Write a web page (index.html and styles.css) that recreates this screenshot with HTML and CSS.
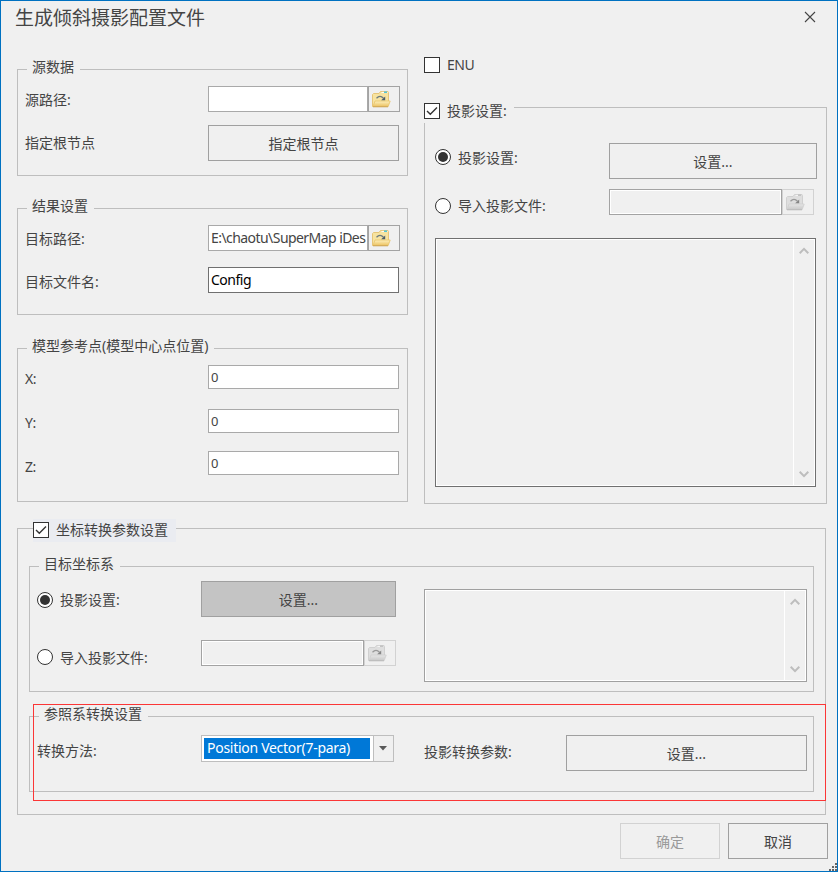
FILE: index.html
```
<!DOCTYPE html>
<html lang="zh-CN">
<head>
<meta charset="utf-8">
<title>生成倾斜摄影配置文件</title>
<link rel="stylesheet" href="styles.css">
</head>
<body>
<svg class="defs" width="0" height="0" aria-hidden="true">
  <defs>
    <linearGradient id="gold" x1="0" y1="0" x2="0" y2="1"><stop offset="0" stop-color="#fdf0bd"/><stop offset="1" stop-color="#ecc261"/></linearGradient>
    <linearGradient id="grey" x1="0" y1="0" x2="0" y2="1"><stop offset="0" stop-color="#e6e6e6"/><stop offset="1" stop-color="#c9c9c9"/></linearGradient>
    <symbol id="folder" viewBox="0 0 20 18">
      <path d="M1.5 16.5V4.5L2.5 3.5H8L9.5 1.5H17L17.5 2.5V11L15.5 16.5Z" fill="#f7e3a0" stroke="#e6c578"/>
      <path d="M10.5 2.4H16.5" stroke="#fff"/><path d="M13 2.2H16" stroke="#42bed0" stroke-width="1.4"/>
      <path d="M2 16.5L4 11H19.2L17.2 16.5Z" fill="url(#gold)" stroke="#e8c468" stroke-width=".8"/>
      <path d="M2 16.8H17" stroke="#c9a052" stroke-width=".9"/>
      <path d="M5.5 8.2Q9 4.6 12.5 8.2" fill="none" stroke="#6b7a80" stroke-width="1.3"/><path d="M14.2 6.4V10.2H10.2Z" fill="#4c5d68"/>
    </symbol>
    <symbol id="folder-off" viewBox="0 0 20 18">
      <path d="M1.5 16.5V4.5L2.5 3.5H8L9.5 1.5H17L17.5 2.5V11L15.5 16.5Z" fill="#dedede" stroke="#d0d0d0"/>
      <path d="M10.5 2.4H13" stroke="#f5f5f5"/><path d="M13 2.2H16" stroke="#bcbcbc" stroke-width="1.2"/>
      <path d="M2 16.5L4 11H19.2L17.2 16.5Z" fill="url(#grey)" stroke="#cfcfcf" stroke-width=".8"/>
      <path d="M2 16.8H17" stroke="#b5b5b5" stroke-width=".9"/>
      <path d="M5.5 8.2Q9 4.6 12.5 8.2" fill="none" stroke="#999" stroke-width="1.3"/><path d="M14.2 6.4V10.2H10.2Z" fill="#858585"/>
    </symbol>
    <symbol id="check" viewBox="0 0 14 14"><path d="M2 7L5.3 10.3L12 3.6" fill="none" stroke="#333" stroke-width="1.4"/></symbol>
    <symbol id="up" viewBox="0 0 10 8"><path d="M.7 6.2L5 1.9L9.3 6.2" fill="none" stroke="#bdbdbd" stroke-width="2"/></symbol>
    <symbol id="down" viewBox="0 0 10 8"><path d="M.7 1.8L5 6.1L9.3 1.8" fill="none" stroke="#bdbdbd" stroke-width="2"/></symbol>
  </defs>
</svg>
<main class="dialog">
  <header class="titlebar">
    <h1 class="title">生成倾斜摄影配置文件</h1>
    <svg class="close" viewBox="0 0 12 12"><path d="M1 1L11 11M11 1L1 11" stroke="#444" stroke-width="1.1"/></svg>
  </header>

  <div class="columns">
    <div class="left">
      <section class="group source">
        <div class="legend">源数据</div>
        <div class="row path"><span class="label">源路径:</span><div class="field"></div><div class="browse"><svg><use href="#folder"/></svg></div></div>
        <div class="row root"><span class="label">指定根节点</span><div class="button">指定根节点</div></div>
      </section>
      <section class="group result">
        <div class="legend">结果设置</div>
        <div class="row path"><span class="label">目标路径:</span><div class="field"><span class="dir">E:\chaotu\SuperMap iDes</span></div><div class="browse"><svg><use href="#folder"/></svg></div></div>
        <div class="row name"><span class="label">目标文件名:</span><div class="field strong"><span class="latin">Config</span></div></div>
      </section>
      <section class="group origin">
        <div class="legend">模型参考点(模型中心点位置)</div>
        <div class="row x"><span class="label">X:</span><div class="field"><span class="num">0</span></div></div>
        <div class="row y"><span class="label">Y:</span><div class="field"><span class="num">0</span></div></div>
        <div class="row z"><span class="label">Z:</span><div class="field"><span class="num">0</span></div></div>
      </section>
    </div>

    <div class="right">
      <div class="option enu"><span class="box"></span><span class="latin">ENU</span></div>
      <section class="group projection">
        <div class="option head"><span class="box"><svg><use href="#check"/></svg></span><span>投影设置:</span></div>
        <div class="row set"><div class="option"><span class="radio on"></span><span class="caption">投影设置:</span></div><div class="button">设置...</div></div>
        <div class="row import"><div class="option"><span class="radio"></span><span>导入投影文件:</span></div><div class="field off"></div><div class="browse off"><svg><use href="#folder-off"/></svg></div></div>
        <div class="memo dark"><div class="scroll"><svg><use href="#up"/></svg><svg><use href="#down"/></svg></div></div>
      </section>
    </div>
  </div>

  <section class="group transform">
    <div class="option head"><span class="box"><svg><use href="#check"/></svg></span><span>坐标转换参数设置</span></div>
    <section class="group target">
      <div class="legend">目标坐标系</div>
      <div class="split">
        <div class="choices">
          <div class="row set"><div class="option"><span class="radio on"></span><span>投影设置:</span></div><div class="button pressed">设置...</div></div>
          <div class="row import"><div class="option"><span class="radio"></span><span class="caption">导入投影文件:</span></div><div class="field off"></div><div class="browse off"><svg><use href="#folder-off"/></svg></div></div>
        </div>
        <div class="memo"><div class="scroll"><svg><use href="#up"/></svg><svg><use href="#down"/></svg></div></div>
      </div>
    </section>
    <section class="group datum">
      <div class="legend">参照系转换设置</div>
      <div class="row method">
        <span class="label">转换方法:</span>
        <div class="combo"><span class="value">Position Vector(7-para)</span><span class="drop"><svg viewBox="0 0 8 5"><path d="M0 0H8L4 4.5Z" fill="#595959"/></svg></span></div>
        <span class="label params">投影转换参数:</span>
        <div class="button">设置...</div>
      </div>
    </section>
  </section>

  <footer class="footer"><div class="button disabled">确定</div><div class="button">取消</div></footer>
  <div class="highlight"></div>
  <svg class="grip" viewBox="0 0 8 8" shape-rendering="crispEdges"><path d="M6 0h2v2h-2zM3 3h2v2h-2zM6 3h2v2h-2zM0 6h2v2h-2zM3 6h2v2h-2zM6 6h2v2h-2z" fill="#666"/></svg>
</main>
</body>
</html>
```
FILE: styles.css
```
* { box-sizing: border-box; }
body {
  margin: 0;
  background: #f0f0f0;
  color: #444;
  font: 14px/20px "Noto Sans", "Noto Sans CJK SC", sans-serif;
}
.defs { position: absolute; }
svg { display: block; }
span, .legend, .button, .title { white-space: nowrap; }

.dialog {
  position: relative;
  width: 838px;
  height: 872px;
  border: 1px solid #0071c1;
  background: #f0f0f0;
  overflow: hidden;
}
.titlebar {
  display: flex;
  justify-content: space-between;
  height: 56px;
  padding: 3px 21px 0 14px;
}
.title { margin: 0; font-size: 19px; line-height: 28px; font-weight: 400; }
.close { width: 12px; height: 12px; margin-top: 7px; }

.columns { display: flex; gap: 16px; padding-left: 16px; height: 447px; }
.left { width: 391px; padding-top: 12px; }
.right { width: 403px; }

.group { border: 1px solid #bebebe; }
.legend {
  width: max-content;
  margin: -13px 0 0 9px;
  padding: 0 6px 0 5px;
  background: #f0f0f0;
}
.row { display: flex; }
.left .row { padding-left: 7px; }
.left .label { width: 183px; }

.source { height: 107px; }
.result { height: 107px; margin-top: 32px; }
.origin { height: 154px; margin-top: 33px; }
.path { height: 26px; margin-top: 9px; }
.path .label { margin-top: 4px; }
.path .field { width: 160px; }
.root { height: 36px; margin-top: 13px; }
.root .label { margin-top: 8px; }
.root .button { width: 191px; }
.name { height: 26px; margin-top: 16px; }
.name .label { margin-top: 5px; }
.name .field { width: 191px; }
.origin .row { height: 24px; }
.origin .field { width: 191px; }
.x { margin-top: 9px; }
.y { margin-top: 20px; }
.z { margin-top: 18px; }
.x .label, .y .label { margin-top: 4px; }
.z .label { margin-top: 6px; }
.origin .label { letter-spacing: -.5px; }

.field {
  display: flex;
  align-items: center;
  padding: 0 2px;
  border: 1px solid #a9a9a9;
  background: #fff;
}
.field.strong { border-color: #707070; color: #000; }
.field.off { border-color: #a3a3a3; background: #f0f0f0; box-shadow: inset 0 0 0 1px #fff; }
.num { font-size: 13px; letter-spacing: -.5px; }
.dir { letter-spacing: -.56px; }
.latin { letter-spacing: -.5px; }
.browse { width: 32px; height: 26px; padding: 3px 0 0 2px; border: 1px solid #a3a3a3; }
.browse.off { border-color: #d2d2d2; }
.browse svg { width: 20px; height: 18px; }

.button {
  display: flex;
  align-items: center;
  justify-content: center;
  height: 36px;
  padding-top: 2px;
  border: 1px solid #a0a0a0;
}
.button.pressed { background: #c4c4c4; }
.button.disabled { border-color: #d2d2d2; color: #999; }

.option { display: flex; align-items: center; gap: 7px; }
.caption { padding-top: 2px; }
.box {
  width: 16px;
  height: 16px;
  border: 1px solid #333;
  background: #fff;
}
.box svg { width: 14px; height: 14px; }
.radio {
  display: flex;
  width: 16px;
  height: 16px;
  border: 1px solid #333;
  border-radius: 50%;
  background: #fff;
}
.radio.on::after { content: ""; width: 10px; height: 10px; margin: 2px; border-radius: 50%; background: #333; }
.enu { height: 16px; }

.projection { height: 397px; margin-top: 34px; }
.projection .head { width: 90px; height: 23px; margin: -8px 0 0 -1px; padding-bottom: 1px; background: #f0f0f0; }
.projection .row { padding-left: 10px; }
.projection .row .option { width: 174px; height: 28px; }
.projection .set { margin-top: 20px; }
.projection .button { width: 208px; }
.projection .import { height: 26px; margin-top: 10px; }
.projection .import .option { margin-top: 3px; }
.projection .field { width: 173px; }
.projection .memo { width: 381px; height: 249px; margin: 23px 0 0 10px; }

.memo {
  display: flex;
  justify-content: flex-end;
  padding: 1px;
  border: 1px solid #a0a0a0;
  background: #f0f0f0;
  box-shadow: inset 0 0 0 1px #fff;
}
.memo.dark { border-color: #707070; }
.scroll {
  display: flex;
  flex-direction: column;
  justify-content: space-between;
  width: 21px;
  padding: 7px 5px 7px 5px;
  border-left: 1px solid #fff;
}
.scroll svg { width: 10px; height: 8px; }

.transform { width: 809px; height: 287px; margin: 24px 0 0 16px; }
.transform > .head { width: 143px; height: 23px; margin: -10px 0 0 15px; padding-bottom: 1px; background: #eaecf1; }
.transform > .group { width: 785px; margin: 24px 0 0 11px; }
.target { height: 126px; }
.split { display: flex; padding-left: 7px; }
.choices { width: 387px; padding-top: 7px; }
.choices .option { width: 164px; height: 36px; padding-top: 2px; }
.choices .button { width: 195px; }
.choices .import { height: 26px; margin-top: 23px; }
.choices .import .option { margin-top: -2px; }
.choices .field { width: 163px; }
.split .memo { width: 383px; height: 93px; margin-top: 15px; }

.transform > .datum { height: 76px; }
.method { height: 36px; margin-top: 11px; padding-left: 7px; }
.method .label { width: 164px; margin-top: 6px; }
.method .params { width: 142px; margin: 7px 0 0 30px; }
.method .button { width: 241px; }
.combo { display: flex; width: 193px; height: 27px; border: 1px solid #bebebe; background: #fff; }
.value {
  width: 166px;
  height: 21px;
  margin: 2px 3px 0 2px;
  padding-left: 3px;
  background: #0078d7;
  color: #fff;
  letter-spacing: -.28px;
}
.drop { flex: 1; padding: 10px 0 0 5px; border-left: 1px solid #bebebe; background: #f0f0f0; }
.drop svg { width: 8px; height: 5px; }

.footer { display: flex; justify-content: flex-end; gap: 8px; padding: 8px 9px 0 0; }
.footer .button { width: 100px; }

/* Callout frame and resize grip lie over the dialog content. */
.highlight { position: absolute; left: 32px; top: 703px; width: 793px; height: 97px; border: 1px solid #fb3636; }
.grip { position: absolute; right: 0; bottom: 0; width: 8px; height: 8px; }
```
